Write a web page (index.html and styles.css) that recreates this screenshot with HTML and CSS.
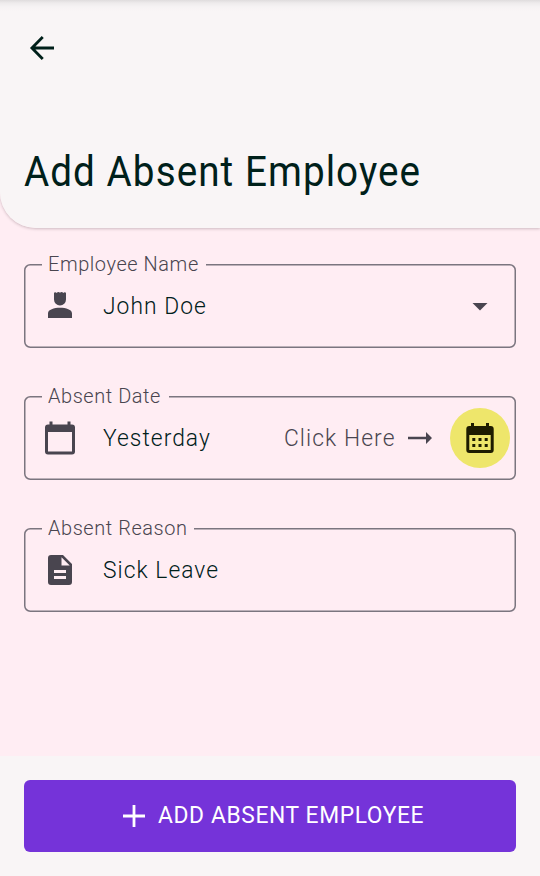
FILE: index.html
```html
<!DOCTYPE html>
<html lang="en">
<head>
<meta charset="utf-8">
<title>Add Absent Employee</title>
<link rel="stylesheet" href="styles.css">
</head>
<body>
<div class="screen">
  <header class="header">
    <svg class="back" viewBox="0 0 24 24"><path d="M20 12H5.500M12.500 4.700 5.300 12 12.500 19.300" fill="none" stroke="currentColor" stroke-width="1.9"/></svg>
    <h1 class="title">Add Absent Employee</h1>
  </header>
  <main class="form">
    <div class="field">
      <svg class="outline" viewBox="0 0 492 84"><rect x=".75" y=".75" width="490.5" height="82.5" rx="5.5"/></svg>
      <span class="label label-name"><span class="label-text">Employee Name</span></span>
      <svg class="icon" viewBox="0 0 36 36"><path d="M12 5.200q0-1 1.200-1 1 0 1.500.8.700-1 1.700-1 1 0 1.600.8.600-.8 1.600-.8 1 0 1.700 1 .500-.8 1.500-.8 1.200 0 1.200 1V11.500a6 6 0 0 1-12 0zM6 30v-4.600c0-3.800 6-5.600 12-5.600s12 1.800 12 5.600V30z"/></svg>
      <span class="value value-name">John Doe</span>
      <svg class="icon caret" viewBox="0 0 36 36"><path d="M10.500 15h15L18 22.500z"/></svg>
    </div>
    <div class="field">
      <svg class="outline" viewBox="0 0 492 84"><rect x=".75" y=".75" width="490.5" height="82.5" rx="5.5"/></svg>
      <span class="label label-date"><span class="label-text">Absent Date</span></span>
      <svg class="icon" viewBox="0 0 36 36"><path fill-rule="evenodd" d="M7.500 1.500h3v3h15v-3h3v3H30a3 3 0 0 1 3 3v24a3 3 0 0 1-3 3H6a3 3 0 0 1-3-3v-24a3 3 0 0 1 3-3h1.500zM6 12v19.500h24V12z"/></svg>
      <span class="value value-date">Yesterday</span>
      <span class="hint">Click Here</span>
      <svg class="arrow" viewBox="0 0 24 14"><path d="M0 5.700h18V1l6 6-6 6V8.300H0z"/></svg>
      <span class="picker"><svg class="icon" viewBox="0 0 36 36"><path fill-rule="evenodd" d="M9 3h3v3h12V3h3v3h1.700a3 3 0 0 1 3 3v21a3 3 0 0 1-3 3H7.300a3 3 0 0 1-3-3V9a3 3 0 0 1 3-3H9zM7.300 15v15h21.400V15z"/><path d="M10.300 18h3v3h-3zm6.200 0h3v3h-3zm6.200 0h3v3h-3zM10.300 24h3v3h-3zm6.200 0h3v3h-3zm6.200 0h3v3h-3z"/></svg></span>
    </div>
    <div class="field">
      <svg class="outline" viewBox="0 0 492 84"><rect x=".75" y=".75" width="490.5" height="82.5" rx="5.5"/></svg>
      <span class="label label-reason"><span class="label-text">Absent Reason</span></span>
      <svg class="icon" viewBox="0 0 36 36"><path fill-rule="evenodd" d="M9 3h12l9 9v18a3 3 0 0 1-3 3H9a3 3 0 0 1-3-3V6a3 3 0 0 1 3-3zm10.500 2.250v8.250h8.250zM12 18v3h12v-3zm0 6v3h12v-3z"/></svg>
      <span class="value value-reason">Sick Leave</span>
    </div>
  </main>
  <footer class="footer">
    <button class="submit" type="button">
      <svg class="plus" viewBox="0 0 22 22"><path d="M11 0v22M0 11h22" stroke="currentColor" stroke-width="2.8"/></svg>
      <span class="submit-text">ADD ABSENT EMPLOYEE</span>
    </button>
  </footer>
</div>
</body>
</html>
```

FILE: styles.css
```css
* { box-sizing: border-box; }
body { margin: 0; font-family: Roboto, "Liberation Sans", sans-serif; }
.screen {
  display: flex;
  flex-direction: column;
  height: 876px;
  overflow: hidden;
  background: #ffedf3;
}
.header {
  height: 228px;
  padding: 30px 24px 0;
  border-bottom-left-radius: 36px;
  background: linear-gradient(#dfdcdd 0, #eeebec 3px, #f6f3f4 7px, #f9f5f6 11px);
  box-shadow: 0 1px 3px rgba(60, 30, 45, .25);
  color: #00201a;
}
.back { display: block; width: 36px; height: 36px; }
/* Condensed letterforms with open tracking */
.title, .label-text, .value, .hint, .submit-text {
  display: inline-block;
  transform: scaleX(.95);
  transform-origin: left center;
}
.title {
  margin: 80px 0 0;
  font-size: 42px;
  line-height: 52px;
  font-weight: 400;
  letter-spacing: 1.15px;
  white-space: nowrap;
  transform: scaleX(.92);
}
.form {
  flex: 1;
  display: flex;
  flex-direction: column;
  gap: 48px;
  padding: 36px 24px 0;
}
.field {
  position: relative;
  display: flex;
  align-items: center;
  height: 84px;
  padding: 0 6px 0 18px;
  color: #49454f;
}
.outline { position: absolute; inset: 0; width: 492px; height: 84px; fill: none; stroke: #7b757f; stroke-width: 1.5; }
.label {
  position: absolute;
  left: 18px;
  top: -13px;
  height: 26px;
  padding-left: 6px;
  background: #ffedf3;
  font-size: 21px;
  font-weight: 300;
  line-height: 26px;
  letter-spacing: .6px;
  white-space: nowrap;
}
.label-name { width: 164px; }
.label-date { width: 127px; }
.label-reason { width: 152px; }
.icon { flex: none; width: 36px; height: 36px; fill: currentColor; }
.value {
  margin-left: 25px;
  color: #00201a;
  font-size: 24px;
  font-weight: 300;
  line-height: 30px;
  letter-spacing: 1.1px;
  white-space: nowrap;
}
.caret { margin-left: auto; margin-right: 12px; }
.hint {
  margin-left: auto;
  font-size: 24px;
  font-weight: 300;
  line-height: 30px;
  letter-spacing: 1.15px;
  transform-origin: right center;
}
.arrow { flex: none; width: 24px; height: 14px; margin: 0 18px 0 12px; fill: currentColor; }
.picker {
  display: flex;
  flex: none;
  align-items: center;
  justify-content: center;
  width: 60px;
  height: 60px;
  border-radius: 50%;
  background: #eee66b;
  color: #1e1c00;
}
.footer { height: 120px; padding: 24px; background: #f9f5f6; }
.submit {
  display: flex;
  align-items: center;
  width: 492px;
  height: 72px;
  padding: 0 0 0 99px;
  border: 0;
  border-radius: 6px;
  background: #7533d9;
  color: #fff;
  font: 400 24px/30px Roboto, "Liberation Sans", sans-serif;
  letter-spacing: .65px;
  white-space: nowrap;
}
.submit-text { margin-bottom: 2px; }
.plus { flex: none; width: 22px; height: 22px; margin-right: 13px; }
```
